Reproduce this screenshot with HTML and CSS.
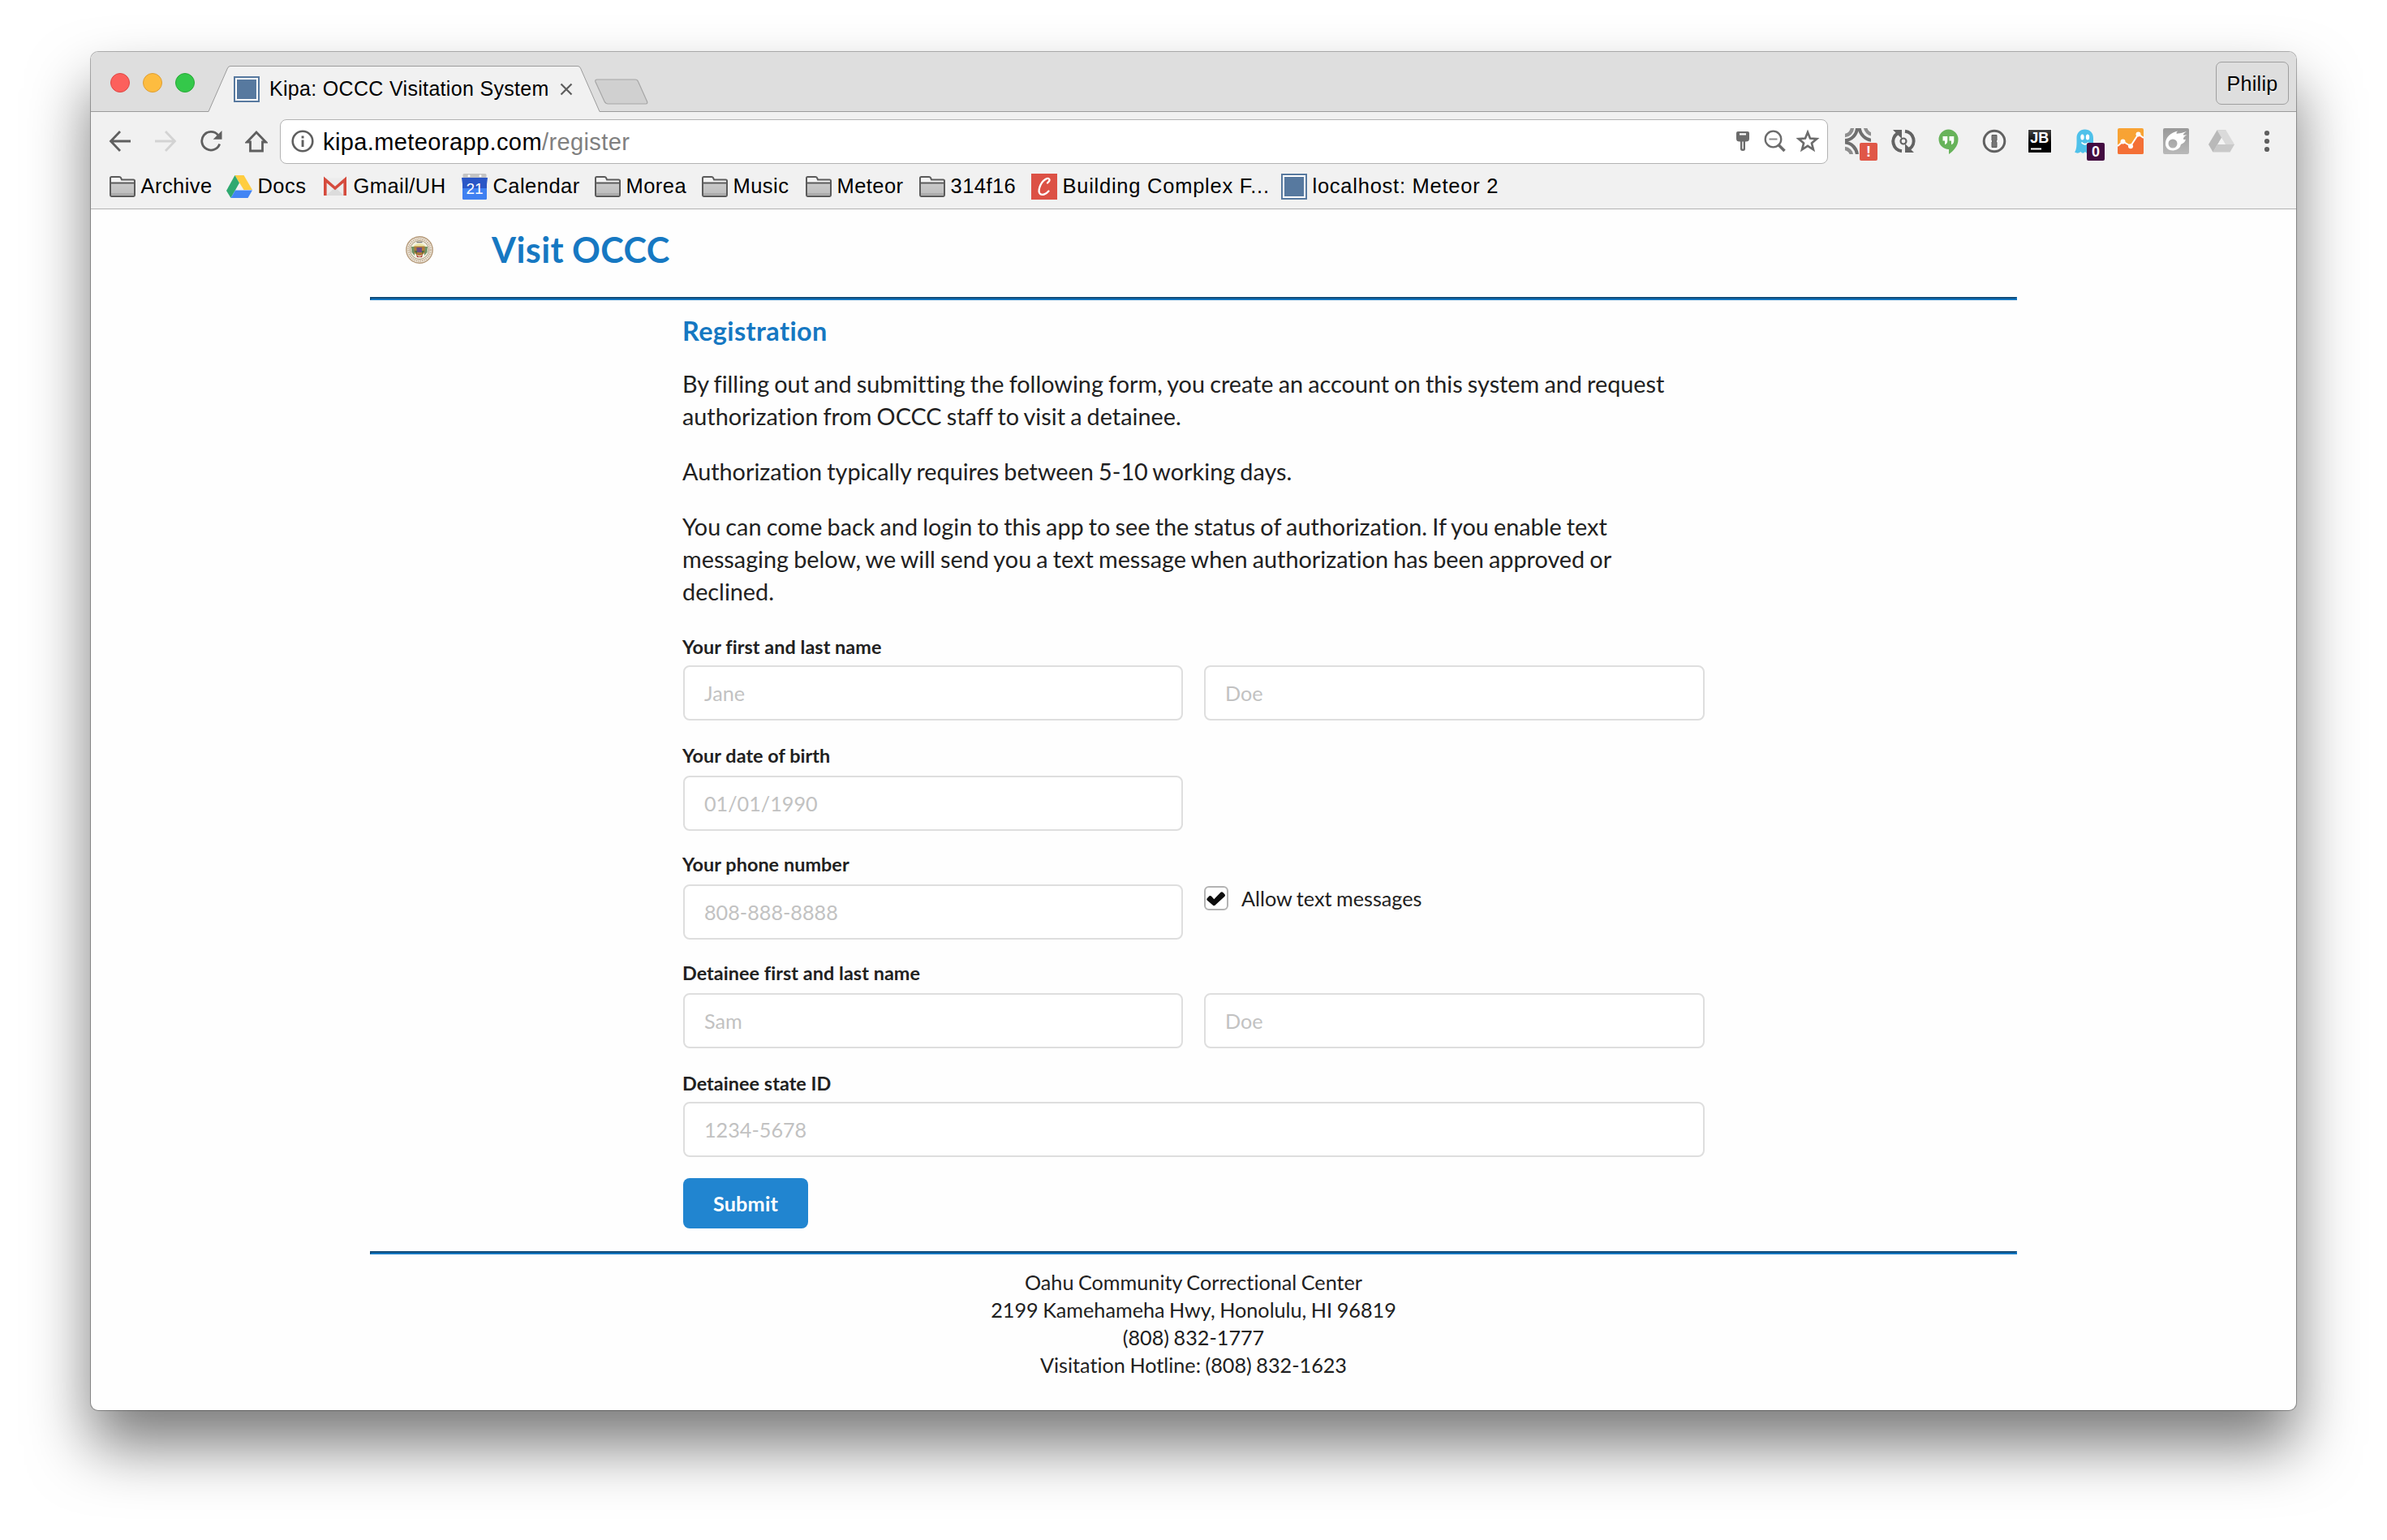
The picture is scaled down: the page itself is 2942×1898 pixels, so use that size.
FILE: index.html
```html
<!DOCTYPE html>
<html lang="en">
<head>
<meta charset="utf-8">
<title>Kipa: OCCC Visitation System</title>
<link rel="stylesheet" href="styles.css">
</head>
<body>
<svg class="defs" width="0" height="0">
  <defs>
    <linearGradient id="folderFill" x1="0" y1="0" x2="0" y2="1"><stop offset="0" stop-color="#cacaca"/><stop offset="1" stop-color="#bdbdbd"/></linearGradient>
    <linearGradient id="jb" x1="0" y1="0" x2="0" y2="1"><stop offset="0" stop-color="#444"/><stop offset=".6" stop-color="#000"/></linearGradient>
    <linearGradient id="grey" x1="0" y1="0" x2="0" y2="1"><stop offset="0" stop-color="#999"/><stop offset="1" stop-color="#b9b9b9"/></linearGradient>
    <clipPath id="box32"><rect width="32" height="32"/></clipPath>
    <symbol id="folder" viewBox="0 0 32 32">
      <path d="M1 26V5.500q0-1.500 1.500-1.500H12q1.500 0 2 1.200L15 7.500H29.500Q31 7.500 31 9V26Q31 28 29 28H3Q1 28 1 26Z" fill="#f4f4f4" stroke="#5b5b5b" stroke-width="2"/>
      <path d="M2 12H30V26.500H2Z" fill="url(#folderFill)"/>
      <path d="M2 25.500H30" stroke="#a2a2a2" stroke-width="2"/>
      <path d="M2 11.500H30" stroke="#5b5b5b" stroke-width="2"/>
      <path d="M2 27.800H30" stroke="#5b5b5b" stroke-width="1.500"/>
    </symbol>
    <symbol id="site" viewBox="0 0 32 32">
      <rect width="32" height="32" fill="#57799f"/><rect x="2" y="2" width="28" height="28" fill="#fff"/><rect x="4" y="4" width="24" height="24" fill="#57799f"/>
    </symbol>
  </defs>
</svg>

<div class="window">
  <div class="tabstrip">
    <div class="lights"><span class="light red"></span><span class="light yellow"></span><span class="light green"></span></div>
    <div class="tab">
      <svg class="tab-shape" width="484" height="57" viewBox="0 0 484 57"><path d="M0 56.500 H1 L24.500 3 Q25.500 .5 28 .5 H456 Q458.500 .5 459.500 3 L483 56.500 H484 V57 H0Z" fill="#f1f1f1"/><path d="M0 56.500 H1 L24.500 3 Q25.500 .5 28 .5 H456 Q458.500 .5 459.500 3 L483 56.500 H484" fill="none" stroke="#9b9b9b"/></svg>
      <svg class="ico" viewBox="0 0 32 32"><use href="#site"/></svg>
      <span class="tab-title">Kipa: OCCC Visitation System</span>
      <svg class="tab-close" width="16" height="16" viewBox="0 0 16 16"><path d="M1.500 1.500 14.500 14.500M14.500 1.500 1.500 14.500" stroke="#5d5d5d" stroke-width="2.200"/></svg>
    </div>
    <svg class="newtab" width="66" height="33" viewBox="0 0 66 33"><path d="M3 1H50Q52.500 1 53.500 3.500L64.500 28Q65.500 31 63 31H16.500Q13.500 31 12 28L1 4Q0 1 3 1Z" fill="#d0d0d0" stroke="#a6a6a6" stroke-width="1.200"/></svg>
    <div class="profile">Philip</div>
  </div>

  <div class="toolbar">
    <div class="nav">
      <svg width="28" height="28" viewBox="0 0 28 28"><path d="M14 2 2.500 14 14 26M2.500 14H27" fill="none" stroke="#5f5f5f" stroke-width="2.800"/></svg>
      <svg width="28" height="28" viewBox="0 0 28 28"><path d="M14 2 25.500 14 14 26M25.500 14H1" fill="none" stroke="#d3d3d3" stroke-width="2.800"/></svg>
      <svg width="28" height="28" viewBox="0 0 28 28"><path d="M22.500 6.200A11.300 11.300 0 1 0 24.700 17.500" fill="none" stroke="#5f5f5f" stroke-width="2.800"/><path d="M27.500 1V11.800H16.700Z" fill="#5f5f5f"/></svg>
      <svg width="28" height="28" viewBox="0 0 28 28"><path d="M14 3 2.500 15H6.500V26H21.500V15H25.500Z" fill="none" stroke="#5f5f5f" stroke-width="2.800"/></svg>
    </div>
    <div class="omnibox">
      <svg width="28" height="28" viewBox="0 0 28 28"><circle cx="14" cy="14" r="12.300" fill="none" stroke="#5f5f5f" stroke-width="2.600"/><path d="M12.600 12.500h2.900V21h-2.900zM12.600 7.500h2.900v3h-2.900z" fill="#5f5f5f"/></svg>
      <span class="url">kipa.meteorapp.com<span class="path">/register</span></span>
      <svg class="key" width="16" height="26" viewBox="0 0 16 26"><path fill-rule="evenodd" d="M2 1H14Q16 1 16 3V10Q16 13.500 12 13.500H11V22.500Q11 25 8 25T5 22.500V13.500H4Q0 13.500 0 10V3Q0 1 2 1ZM4 3.200V5.400H12V3.200ZM7.300 13.500V22.500H8.700V13.500Z" fill="#6b6b6b"/></svg>
      <svg class="mag" width="28" height="28" viewBox="0 0 28 28"><circle cx="11.500" cy="11.500" r="9.800" fill="none" stroke="#6b6b6b" stroke-width="2.300"/><path d="M6.500 11.500H16.500" stroke="#8b8b8b" stroke-width="2"/><path d="M18 18.500 25.500 26" stroke="#6b6b6b" stroke-width="3.500"/></svg>
      <svg class="star" width="30" height="30" viewBox="0 0 30 30"><path d="M15 4 18 11.600 26.200 12.100 19.900 17.400 22 25.400 15 20.900 8 25.400 10.100 17.400 3.800 12.100 12 11.600Z" fill="none" stroke="#6b6b6b" stroke-width="2.600"/></svg>
    </div>
    <div class="extensions">
      <div class="ext">
        <svg class="ico" viewBox="0 0 32 32"><g clip-path="url(#box32)" fill="none"><path d="M15-1A16 16 0 0 1-1 15M34 15A17.500 17.500 0 0 1 17.500-1M-1 17.500A16.500 16.500 0 0 1 15 34" stroke="#6e6e6e" stroke-width="4"/><path d="M9-1A10 10 0 0 1-1 9M34 7.500A10 10 0 0 1 25-1M-1 25A9 9 0 0 1 8 34" stroke="#8e8e8e" stroke-width="4.400"/></g></svg>
        <span class="badge alert">!</span>
      </div>
      <div class="ext">
        <svg class="ico" viewBox="0 0 32 32"><path d="M8.500 6.500A12 12 0 0 0 14 28.300M23.500 25.500A12 12 0 0 0 18 3.700" fill="none" stroke="#636363" stroke-width="4"/><path d="M3 2H14V13ZM29 30H18V19Z" fill="#636363"/><circle cx="16" cy="16" r="3.500" fill="none" stroke="#636363" stroke-width="2.200"/></svg>
      </div>
      <div class="ext">
        <svg class="ico" viewBox="0 0 32 32"><path d="M15.500 1.500A12.200 12.200 0 0 1 27.500 14C27.500 22 21.500 28 16 32V26A12.200 12.200 0 0 1 15.500 1.500Z" fill="#67b35a"/><path d="M8.500 10H14.300V15.500Q14.300 19 11 20.300V15.500H8.500ZM16.500 10H22.300V15.500Q22.300 19 19 20.300V15.500H16.500Z" fill="#fff"/></svg>
      </div>
      <div class="ext">
        <svg class="ico" viewBox="0 0 32 32"><circle cx="16" cy="16" r="12.800" fill="#f5f5f5" stroke="#616161" stroke-width="3"/><path d="M13 8.500H19V15L17.800 16 19 17.200V23.500H13V17L14.200 16 13 15Z" fill="#777" stroke="#5c5c5c"/></svg>
      </div>
      <div class="ext">
        <svg class="ico" viewBox="0 0 32 32"><rect x="1" y="1" width="30" height="30" fill="#fff"/><rect x="2" y="2" width="28" height="28" fill="url(#jb)"/><text x="4.200" y="17.500" class="jb-text" textLength="23">JB</text><path d="M5 25.500H18" stroke="#fff" stroke-width="2.200"/></svg>
      </div>
      <div class="ext">
        <svg class="ico" viewBox="0 0 32 32"><path d="M15.500 1.500C22 1.500 26 6 26 12V30Q24 27 21.500 30.500 18 32 16 29 13 32.500 10.500 29 7 32 3 29.500C6 26 5.500 18 5.500 12 5.500 6 9.500 1.500 15.500 1.500Z" fill="#4fc1ea"/><ellipse cx="12.500" cy="11" rx="2.200" ry="3.600" fill="#fff"/><ellipse cx="19" cy="11" rx="2.200" ry="3.600" fill="#fff"/><path d="M11.500 17.500Q15.700 22 20 17.500" fill="none" stroke="#fff" stroke-width="1.800"/></svg>
        <span class="badge count">0</span>
      </div>
      <div class="ext">
        <svg class="ico" viewBox="0 0 32 32"><rect width="32" height="32" rx="2" fill="#f8a334"/><path d="M0 21 6.500 16.500 16 22 25.500 7.500 32 11.500V30Q32 32 30 32H2Q0 32 0 30Z" fill="#f47036"/><path d="M0 22 6.500 16.500 16 22 25.500 7.500 32 12" fill="none" stroke="#fff" stroke-width="2"/><circle cx="6.500" cy="16.500" r="3" fill="#fff"/><circle cx="16" cy="22.200" r="3" fill="#fff"/><circle cx="25.500" cy="7.500" r="3" fill="#fff"/></svg>
      </div>
      <div class="ext">
        <svg class="ico" viewBox="0 0 32 32"><rect width="32" height="32" rx="2" fill="url(#grey)"/><path fill-rule="evenodd" d="M3 18C3.500 11 9 6 18 3.500Q15.500 6 17 6.800 22 6.500 29 4 24 7 25 8.500 27 8.500 29.500 8 24.500 11 25 13.500 26.500 14.500 28 13.500 27 18 22 20 21 26 13 27.500C6 28 2.500 23.500 3 18ZM12 13.500A5.500 5.500 0 1 0 12 24.500 5.500 5.500 0 1 0 12 13.500Z" fill="#fff"/></svg>
      </div>
      <div class="ext">
        <svg class="ico" viewBox="0 0 32 32"><path d="M10.500 2.500H21.500L16 12 5.500 29.500 0 20Z" fill="#b9b9b9"/><path d="M10.500 2.500H21.500L32 20H21Z" fill="#dadada"/><path d="M11 20H32L26.500 29.500H5.500Z" fill="#c9c9c9"/><path d="M16 12 20.700 20H11.300Z" fill="#f4f4f4"/></svg>
      </div>
    </div>
    <svg class="menu" width="8" height="28" viewBox="0 0 8 28"><circle cx="4" cy="4" r="3.100"/><circle cx="4" cy="14" r="3.100"/><circle cx="4" cy="24" r="3.100"/></svg>
  </div>

  <div class="bookmarks">
    <div class="bm"><svg class="ico" viewBox="0 0 32 32"><use href="#folder"/></svg><span>Archive</span></div>
    <div class="bm"><svg class="ico" viewBox="0 0 32 32"><path d="M10.500 2H21.500L32 20H21.500Z" fill="#ffcd40"/><path d="M10.500 2 16 11.500 5.500 30 0 21Z" fill="#2fa970"/><path d="M11 20.500H32L26.500 30H5.500Z" fill="#4285f4"/></svg><span>Docs</span></div>
    <div class="bm"><svg class="ico" viewBox="0 0 32 32"><rect x="2" y="5.500" width="28" height="21.500" rx="1.500" fill="#ececec"/><path d="M5 27 16 17 27 27Z" fill="#dcdcdc"/><path d="M3.800 27V7.500L16 18 28.200 7.500V27" fill="none" stroke="#d54b3d" stroke-width="3.600"/></svg><span>Gmail/UH</span></div>
    <div class="bm"><svg class="ico" viewBox="0 0 32 32"><rect x="1.500" y="0" width="29" height="8" rx="1.500" fill="#c4c4c4"/><circle cx="9" cy="2.800" r="1.500" fill="#fff"/><circle cx="23" cy="2.800" r="1.500" fill="#fff"/><path d="M0 5H32L31 13V30Q31 32 29 32H3Q1 32 1 30V13Z" fill="#2a56c6"/><path d="M1 18H31V30Q31 32 29 32H3Q1 32 1 30Z" fill="#3f80f1"/><text x="16" y="24.500" class="cal-text">21</text></svg><span>Calendar</span></div>
    <div class="bm"><svg class="ico" viewBox="0 0 32 32"><use href="#folder"/></svg><span>Morea</span></div>
    <div class="bm"><svg class="ico" viewBox="0 0 32 32"><use href="#folder"/></svg><span>Music</span></div>
    <div class="bm"><svg class="ico" viewBox="0 0 32 32"><use href="#folder"/></svg><span>Meteor</span></div>
    <div class="bm"><svg class="ico" viewBox="0 0 32 32"><use href="#folder"/></svg><span>314f16</span></div>
    <div class="bm"><svg class="ico" viewBox="0 0 32 32"><rect width="32" height="32" fill="#dc5145"/><path d="M20 11.500C25 7 21.500 4.500 17.500 7 11 11 7.500 22 11 25 14 27.200 18.500 25 21.500 21.500" fill="none" stroke="#fff" stroke-width="2.300" stroke-linecap="round"/></svg><span class="long">Building Complex F...</span></div>
    <div class="bm"><svg class="ico" viewBox="0 0 32 32"><use href="#site"/></svg><span class="long">localhost: Meteor 2</span></div>
  </div>

  <div class="page">
    <header class="site-header">
      <svg class="seal" width="34" height="34" viewBox="0 0 34 34"><circle cx="17" cy="17" r="16.200" fill="#f3ece2" stroke="#b59a7a" stroke-width="1.400"/><circle cx="17" cy="17" r="13.600" fill="none" stroke="#c0ac90" stroke-width="2.200" stroke-dasharray="1.300 1.100"/><circle cx="17" cy="17" r="11.500" fill="#f1f0e2" stroke="#98815f" stroke-width=".8"/><path d="M9 13Q17 5 25 13Z" fill="#ece6a6"/><path d="M13.500 7.500h7" stroke="#767676" stroke-width="1.300"/><path d="M7 13H11V24L7.500 20ZM23 13H27L26.500 20 23 24Z" fill="#6f9264"/><path d="M10.500 12.500H23.500V20Q21 24 17 24T10.500 20Z" fill="#b07a3a"/><path d="M13.500 14H20V20H13.500Z" fill="#6b4c83"/><path d="M10.500 18H14V22ZM23.500 18H20V22Z" fill="#4f6d3d"/><path d="M13 22.500Q17 28 21 22.500L20 26H14Z" fill="#a8342e"/></svg>
      <h1>Visit OCCC</h1>
    </header>
    <hr>
    <main>
      <h2>Registration</h2>
      <p>By filling out and submitting the following form, you create an account on this system and request authorization from OCCC staff to visit a detainee.</p>
      <p>Authorization typically requires between 5-10 working days.</p>
      <p>You can come back and login to this app to see the status of authorization. If you enable text messaging below, we will send you a text message when authorization has been approved or declined.</p>
      <form>
        <div class="field">
          <label>Your first and last name</label>
          <div class="inputs"><input type="text" placeholder="Jane"><input type="text" placeholder="Doe"></div>
        </div>
        <div class="field roomy snug">
          <label>Your date of birth</label>
          <div class="inputs"><input type="text" placeholder="01/01/1990"></div>
        </div>
        <div class="field roomy snug">
          <label>Your phone number</label>
          <div class="inputs"><input type="text" placeholder="808-888-8888">
            <div class="check"><svg width="30" height="30" viewBox="0 0 30 30"><rect x="1" y="1" width="28" height="28" rx="5" fill="#fff" stroke="#b3b3b3" stroke-width="2"/><path d="M3.500 15.500 6.500 12.300Q8 11.500 9.200 12.800L12.300 16.200 20.500 7.800Q22 6.800 23.400 8L25.600 10.300Q26.500 11.500 25.500 12.700L13.500 23.800Q12.300 24.800 11 23.700L3.700 17.500Q3 16.500 3.500 15.500Z" fill="#0d0d0d"/></svg><span>Allow text messages</span></div>
          </div>
        </div>
        <div class="field roomy">
          <label>Detainee first and last name</label>
          <div class="inputs"><input type="text" placeholder="Sam"><input type="text" placeholder="Doe"></div>
        </div>
        <div class="field last">
          <label>Detainee state ID</label>
          <div class="inputs wide"><input type="text" placeholder="1234-5678"></div>
        </div>
        <button type="button">Submit</button>
      </form>
    </main>
    <hr>
    <footer>
      <div>Oahu Community Correctional Center</div>
      <div>2199 Kamehameha Hwy, Honolulu, HI 96819</div>
      <div>(808) 832-1777</div>
      <div>Visitation Hotline: (808) 832-1623</div>
    </footer>
  </div>
</div>
</body>
</html>
```
FILE: styles.css
```css
* { box-sizing: border-box; }
html, body { margin: 0; background: #fff; }
body { padding: 64px 112px 160px; overflow: hidden; font-family: Lato, sans-serif; }
svg { display: block; flex: none; }
.defs { position: absolute; }
.ico { width: 32px; height: 32px; }

.window {
  width: 2718px; height: 1674px; border-radius: 9px; overflow: hidden; background: #fefefe;
  box-shadow: 0 0 0 1px rgba(0,0,0,.3), 0 44px 76px rgba(0,0,0,.52);
}

/* Browser chrome */
.tabstrip, .toolbar, .bookmarks { font-family: "Liberation Sans", Arial, sans-serif; color: #000; font-size: 25px; letter-spacing: .35px; }
.tabstrip { display: flex; align-items: flex-start; height: 74px; background: #dedede; border-bottom: 1px solid #9b9b9b; padding: 0 9px 0 24px; }
.lights { display: flex; gap: 16px; padding-top: 26px; margin-right: 16px; }
.light { width: 24px; height: 24px; border-radius: 50%; border: 1px solid; }
.red { background: #fc605c; border-color: #df4744; }
.yellow { background: #fdbc40; border-color: #de9f34; }
.green { background: #34c84a; border-color: #27aa35; }
.tab { position: relative; display: flex; align-items: center; width: 484px; height: 57px; margin-top: 17px; padding: 0 0 0 32px; }
.tab-shape { position: absolute; left: 0; top: 0; }
.tab > .ico, .tab-title, .tab-close { position: relative; }
.tab > .ico { margin-right: 12px; }
.tab-title { width: 350px; white-space: nowrap; letter-spacing: .32px; }
.tab-close { margin-left: 8px; }
.newtab { margin: 33px 0 0 -7px; }
.profile { margin: 12px 0 0 auto; width: 90px; height: 53px; border: 1.500px solid #9f9f9f; border-radius: 7px; display: flex; align-items: center; justify-content: center; padding-top: 2px; text-shadow: 0 2px 0 rgba(255,255,255,.5); }

.toolbar { display: flex; align-items: center; height: 72px; background: #f1f1f1; padding-left: 22px; }
.nav { display: flex; gap: 28px; }
.omnibox { display: flex; align-items: center; width: 1908px; height: 55px; margin-left: 15px; padding-left: 13px; border: 1.500px solid #b3b3b3; border-radius: 8px; background: #fff; font-size: 29px; letter-spacing: .4px; }
.url { margin-left: 11px; padding-top: 3px; white-space: nowrap; }
.path { color: #808080; }
.key { margin-left: auto; }
.mag { margin-left: 18px; }
.star { margin: 0 9px 0 11px; }
.extensions { display: flex; gap: 24px; margin-left: 21px; }
.ext { position: relative; width: 32px; }
.badge { position: absolute; left: 18px; top: 18px; width: 22px; height: 22px; border-radius: 2px; color: #fff; font: bold 18px/23px "Liberation Sans", Arial, sans-serif; text-align: center; letter-spacing: 0; }
.alert { background: #e05747; }
.count { background: #430c41; }
.jb-text { font: bold 18px "Liberation Sans", Arial, sans-serif; fill: #fff; letter-spacing: 0; }
.cal-text { font: 19px "Liberation Sans", Arial, sans-serif; fill: #fff; text-anchor: middle; letter-spacing: 0; }
.menu { margin-left: 36px; fill: #5f5f5f; }

.bookmarks { display: grid; grid-template-columns: 144px 118px 172px 164px 132px 128px 140px 138px 308px auto; align-items: center; height: 48px; padding: 0 0 8px 23px; background: #f1f1f1; border-bottom: 1px solid #b3b3b3; font-size: 25.500px; letter-spacing: .45px; }
.bm { display: flex; align-items: center; gap: 6.500px; white-space: nowrap; }
.bm .long { letter-spacing: .75px; }

/* Site */
.page { width: 2030px; margin: 0 auto; color: #212121; font-variant-ligatures: none; word-spacing: -.9px; }
.site-header { display: flex; align-items: flex-start; height: 108px; padding: 19px 0 0 44px; }
.seal { margin-top: 14px; }
h1, h2 { margin: 0; font-weight: 700; color: #1678c2; }
h1 { margin-left: 72px; font-size: 43.200px; line-height: 60px; letter-spacing: .4px; }
hr { height: 4px; margin: 0; border: 2px solid; border-color: #0f4a78 #1678c2 #1678c2 #0f4a78; }
main { width: 1260px; margin: 18px auto 28px; }
h2 { font-size: 32.400px; line-height: 40px; margin-bottom: 25px; letter-spacing: .4px; }
p { margin: 0 0 28px; font-size: 28.800px; line-height: 40px; word-spacing: -1.200px; }
form { padding-top: 5px; }
.field { margin-bottom: 28px; }
.snug { margin-bottom: 26px; }
label { display: block; font-size: 23.400px; font-weight: 700; line-height: 30px; margin-bottom: 8px; word-spacing: 0; letter-spacing: .05px; }
.roomy label { margin-bottom: 10px; }
.inputs { display: grid; grid-template-columns: 616px 617px; gap: 26px; height: 68px; padding-left: 1px; }
.wide { grid-template-columns: 1259px; }
input { width: 100%; height: 68px; padding: 0 24px; border: 2px solid #dedede; border-radius: 8px; background: #fff; font: 25.200px Lato, sans-serif; }
input::placeholder { color: #c2c2c2; opacity: 1; }
.check { display: flex; align-items: center; gap: 16px; height: 34px; font-size: 25.200px; white-space: nowrap; }
.last { margin-bottom: 26px; }
button { display: block; width: 154px; height: 62px; margin-left: 1px; padding: 0; border: 0; border-radius: 8px; background: #2185d0; color: #fff; font: 700 25.200px Lato, sans-serif; letter-spacing: .2px; }
footer { padding-top: 17px; text-align: center; font-size: 25.200px; line-height: 34px; }
```
